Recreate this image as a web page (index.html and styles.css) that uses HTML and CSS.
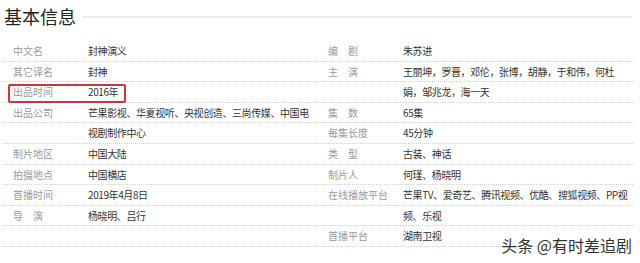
FILE: index.html
```html
<!DOCTYPE html>
<html lang="zh">
<head>
<meta charset="utf-8">
<title>基本信息</title>
<link rel="stylesheet" href="styles.css">
</head>
<body>
<div class="page">
  <div class="title-bar">
    <h2 class="title">基本信息</h2>
    <div class="title-line"></div>
  </div>
  <div class="info">
    <div class="col">
      <div class="line"><span class="name">中文名</span><span class="value">封神演义</span></div>
      <div class="line"><span class="name">其它译名</span><span class="value">封神</span></div>
      <div class="line marked"><span class="name">出品时间</span><span class="value">2016年</span><span class="mark"></span></div>
      <div class="line"><span class="name">出品公司</span><span class="value">芒果影视、华夏视听、央视创造、三尚传媒、中国电</span></div>
      <div class="line"><span class="name"></span><span class="value">视剧制作中心</span></div>
      <div class="line"><span class="name">制片地区</span><span class="value">中国大陆</span></div>
      <div class="line"><span class="name">拍摄地点</span><span class="value">中国横店</span></div>
      <div class="line"><span class="name">首播时间</span><span class="value">2019年4月8日</span></div>
      <div class="line"><span class="name">导　演</span><span class="value">杨晓明、吕行</span></div>
      <div class="line"><span class="name"></span><span class="value"></span></div>
    </div>
    <div class="col">
      <div class="line"><span class="name">编　剧</span><span class="value">朱苏进</span></div>
      <div class="line"><span class="name">主　演</span><span class="value">王丽坤，罗晋，邓伦，张博，胡静，于和伟，何杜</span></div>
      <div class="line"><span class="name"></span><span class="value">娟，邹兆龙，海一天</span></div>
      <div class="line"><span class="name">集　数</span><span class="value">65集</span></div>
      <div class="line"><span class="name">每集长度</span><span class="value">45分钟</span></div>
      <div class="line"><span class="name">类　型</span><span class="value">古装、神话</span></div>
      <div class="line"><span class="name">制片人</span><span class="value">何瑾、杨晓明</span></div>
      <div class="line"><span class="name">在线播放平台</span><span class="value">芒果TV、爱奇艺、腾讯视频、优酷、搜狐视频、PP视</span></div>
      <div class="line"><span class="name"></span><span class="value">频、乐视</span></div>
      <div class="line"><span class="name">首播平台</span><span class="value">湖南卫视</span></div>
    </div>
  </div>
  <div class="watermark">头条 @有时差追剧</div>
</div>
</body>
</html>
```
FILE: styles.css
```css
* { box-sizing: border-box; }
html, body {
  margin: 0;
  padding: 0;
  background: #fff;
}
body {
  font-family: "Noto Sans CJK SC", "Noto Sans", sans-serif;
  color: #333;
}
.page {
  position: relative;
  width: 640px;
  height: 263px;
  overflow: hidden;
}
.title-bar {
  display: flex;
  align-items: center;
  height: 33px;
  padding: 0 8px 0 4px;
  gap: 6px;
}
.title {
  margin: 0;
  font-size: 18px;
  font-weight: normal;
  line-height: 33px;
  color: #222;
  white-space: nowrap;
}
.title-line {
  flex: 1;
  height: 2px;
  background: #ececec;
}
.info {
  display: flex;
  margin-top: 8px;
  padding-left: 3px;
}
.col {
  width: 315px;
  display: flex;
  flex-direction: column;
}
.line {
  position: relative;
  display: grid;
  grid-template-columns: 85px 1fr;
  height: 20.6px;
  line-height: 19.6px;
  font-size: 10px;
  border-bottom: 1px dotted #d3d3d3;
  white-space: nowrap;
}
.name {
  padding-left: 10px;
  color: #9a9a9a;
}
.value {
  color: #333;
  letter-spacing: -0.4px;
}
.mark {
  position: absolute;
  left: 5px;
  top: 2px;
  width: 118px;
  height: 19px;
  border: 2px solid #c8363c;
  border-radius: 2px;
}
.watermark {
  position: absolute;
  right: 8px;
  top: 235px;
  font-size: 16px;
  line-height: 20px;
  color: #333;
  text-shadow: 0 0 2px #fff, 0 0 2px #fff;
  white-space: nowrap;
}
```
